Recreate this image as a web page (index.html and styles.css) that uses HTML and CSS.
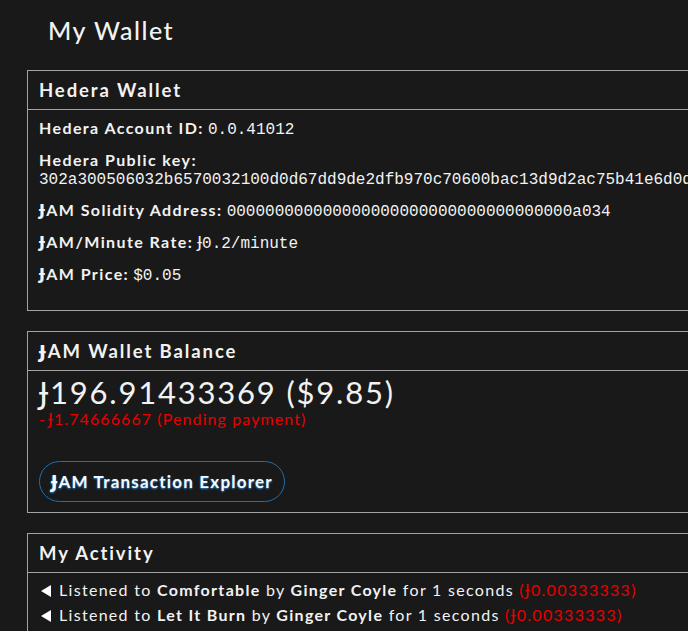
FILE: index.html
```html
<!DOCTYPE html>
<html>
<head>
<meta charset="utf-8">
<link rel="stylesheet" href="styles.css">
</head>
<body>
<div class="page">
  <h1 class="title">My Wallet</h1>

  <section class="card">
    <div class="card-head">Hedera Wallet</div>
    <div class="card-body info">
      <div class="item"><b>Hedera Account ID:</b> <code>0.0.41012</code></div>
      <div class="item"><b>Hedera Public key:</b><br><code>302a300506032b6570032100d0d67dd9de2dfb970c70600bac13d9d2ac75b41e6d0d3f8a91c2b7e05d44</code></div>
      <div class="item"><b><span class="j">Ɉ</span>AM Solidity Address:</b> <code>000000000000000000000000000000000000a034</code></div>
      <div class="item"><b><span class="j">Ɉ</span>AM/Minute Rate:</b> <code><span class="j">Ɉ</span>0.2/minute</code></div>
      <div class="item"><b><span class="j">Ɉ</span>AM Price:</b> <code>$0.05</code></div>
    </div>
  </section>

  <section class="card">
    <div class="card-head"><span class="j">Ɉ</span>AM Wallet Balance</div>
    <div class="card-body balance">
      <div class="amount"><span class="j">Ɉ</span>196.91433369 ($9.85)</div>
      <div class="pending">-<span class="j">Ɉ</span>1.74666667 (Pending payment)</div>
      <button class="explorer"><span class="j">Ɉ</span>AM Transaction Explorer</button>
    </div>
  </section>

  <section class="card">
    <div class="card-head">My Activity</div>
    <ul class="card-body activity">
      <li><svg class="tri" viewBox="0 0 10 12" width="10" height="12"><path d="M10 0 L10 12 L0 6 Z" fill="#fff"/></svg>Listened to <b>Comfortable</b> by <b>Ginger Coyle</b> for 1 seconds <span class="red">(<span class="j">Ɉ</span>0.00333333)</span></li>
      <li><svg class="tri" viewBox="0 0 10 12" width="10" height="12"><path d="M10 0 L10 12 L0 6 Z" fill="#fff"/></svg>Listened to <b>Let It Burn</b> by <b>Ginger Coyle</b> for 1 seconds <span class="red">(<span class="j">Ɉ</span>0.00333333)</span></li>
    </ul>
  </section>
</div>
</body>
</html>
```

FILE: styles.css
```css
html, body {
  margin: 0;
  padding: 0;
  background: #191919;
  color: #f2f2f2;
  font-family: "Lato", "DejaVu Sans", sans-serif;
  overflow: hidden;
}
.page {
  padding: 0 0 0 27px;
  width: max-content;
}
.title {
  margin: 0;
  padding: 14px 0 0 21px;
  height: 70px;
  box-sizing: border-box;
  font-size: 25px;
  font-weight: 500;
  line-height: 32px;
  letter-spacing: 1.5px;
}
.j {
  font-family: "DejaVu Sans", sans-serif;
  line-height: 0;
}
.card {
  border: 1px solid #a3a3a3;
  margin-bottom: 20px;
}
.card-head {
  padding: 8px 11px 8px;
  font-size: 18.5px;
  font-weight: 700;
  line-height: 22px;
  letter-spacing: 1.9px;
  border-bottom: 1px solid #a3a3a3;
}
.card-body {
  margin: 0;
  padding: 9px 11px 14px;
  font-size: 16px;
}
.info {
  padding-bottom: 13px;
}
.info .item {
  line-height: 18px;
  margin-bottom: 14px;
}
.info b {
  letter-spacing: 1.4px;
}
code {
  font-family: "Liberation Mono", monospace;
  font-size: 16px;
  line-height: 0;
}
.balance {
  padding: 3px 11px 10px;
}
.amount {
  font-size: 31px;
  line-height: 36px;
  letter-spacing: 1.8px;
}
.pending {
  color: #e60000;
  font-size: 16px;
  line-height: 18px;
  letter-spacing: 1.1px;
  margin-top: 0;
}
.pending .j {
  margin-left: 2px;
}
.explorer {
  display: block;
  margin-top: 33px;
  height: 41px;
  padding: 0 11px;
  border: 1.5px solid #1f6fb3;
  border-radius: 21px;
  background: transparent;
  color: #f4f8ff;
  font-family: inherit;
  font-size: 17px;
  font-weight: 700;
  letter-spacing: 1.2px;
  text-shadow: 0 1px 2px #2a8ad8;
}
.activity {
  list-style: none;
  padding: 4px 11px 6px 13px;
}
.activity li {
  line-height: 25px;
  letter-spacing: 1.3px;
  white-space: nowrap;
}
.tri {
  vertical-align: -1px;
  margin-right: 8px;
}
.red {
  color: #e60000;
}
```
